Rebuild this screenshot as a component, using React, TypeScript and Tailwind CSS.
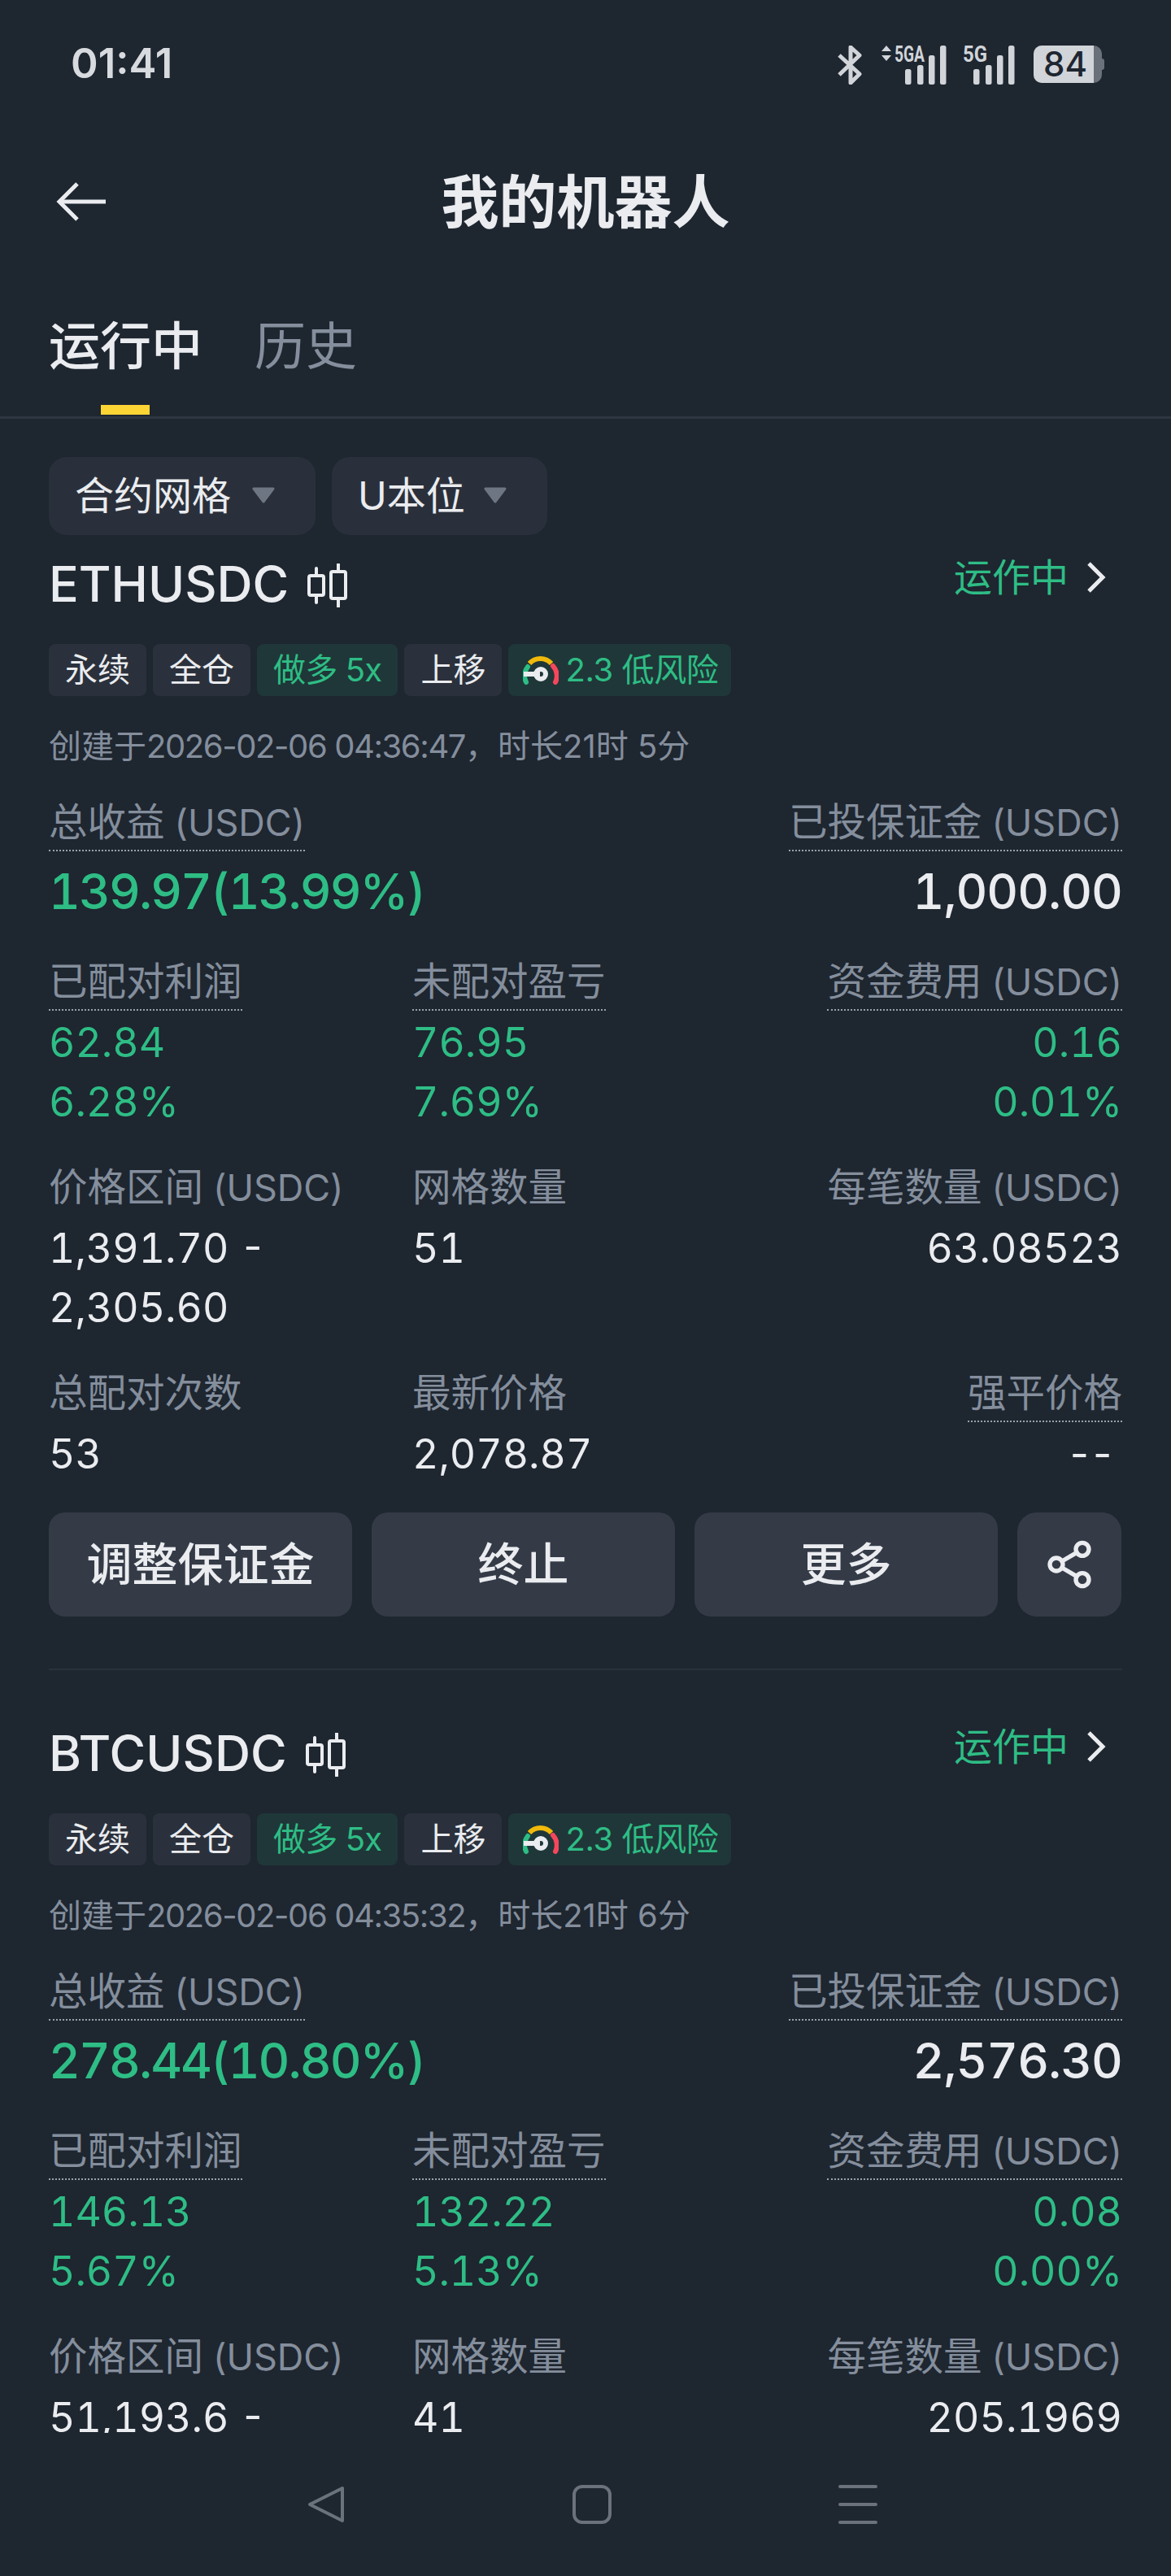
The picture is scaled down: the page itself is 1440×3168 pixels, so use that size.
import { Share2 } from 'lucide-react';

const FONT = 'font-["Inter","Noto_Sans_CJK_SC",sans-serif]';

type Cell = { label: string; unit?: string; dotted?: boolean; values: string[]; green?: boolean };

type Bot = {
  symbol: string;
  time: string;
  duration: string;
  profit: string;
  margin: string;
  rows: Cell[][];
};

const bots: Bot[] = [
  {
    symbol: 'ETHUSDC',
    time: '2026-02-06 04:36:47',
    duration: '，时长21时 5分',
    profit: '139.97(13.99%)',
    margin: '1,000.00',
    rows: [
      [
        { label: '已配对利润', dotted: true, values: ['62.84', '6.28%'], green: true },
        { label: '未配对盈亏', dotted: true, values: ['76.95', '7.69%'], green: true },
        { label: '资金费用', unit: '(USDC)', dotted: true, values: ['0.16', '0.01%'], green: true },
      ],
      [
        { label: '价格区间', unit: '(USDC)', values: ['1,391.70 -', '2,305.60'] },
        { label: '网格数量', values: ['51'] },
        { label: '每笔数量', unit: '(USDC)', values: ['63.08523'] },
      ],
      [
        { label: '总配对次数', values: ['53'] },
        { label: '最新价格', values: ['2,078.87'] },
        { label: '强平价格', dotted: true, values: ['--'] },
      ],
    ],
  },
  {
    symbol: 'BTCUSDC',
    time: '2026-02-06 04:35:32',
    duration: '，时长21时 6分',
    profit: '278.44(10.80%)',
    margin: '2,576.30',
    rows: [
      [
        { label: '已配对利润', dotted: true, values: ['146.13', '5.67%'], green: true },
        { label: '未配对盈亏', dotted: true, values: ['132.22', '5.13%'], green: true },
        { label: '资金费用', unit: '(USDC)', dotted: true, values: ['0.08', '0.00%'], green: true },
      ],
      [
        { label: '价格区间', unit: '(USDC)', values: ['51,193.6 -'] },
        { label: '网格数量', values: ['41'] },
        { label: '每笔数量', unit: '(USDC)', values: ['205.1969'] },
      ],
    ],
  },
];

function Signal5GA() {
  return (
    <svg width="81" height="48" viewBox="0 0 81 48" className="shrink-0 overflow-visible">
      <path d="M7 0l6 7H1zM7 19l6-7H1z" fill="#d1d4d9" />
      <text x="17" y="20" fontSize="28" fontWeight="700" fontFamily="Roboto, sans-serif" fill="#d1d4d9" textLength={37} lengthAdjust="spacingAndGlyphs">
        5GA
      </text>
      <g fill="#d1d4d9">
        <rect x="30" y="29" width="7.5" height="19" rx="2.5" />
        <rect x="45" y="24" width="7.5" height="24" rx="2.5" />
        <rect x="59" y="12" width="7.5" height="36" rx="2.5" />
        <rect x="73" y="0" width="7.5" height="48" rx="2.5" />
      </g>
    </svg>
  );
}

function Signal5G() {
  return (
    <svg width="63" height="48" viewBox="0 0 63 48" className="shrink-0 overflow-visible">
      <text x="0" y="20" fontSize="28" fontWeight="700" fontFamily="Roboto, sans-serif" fill="#d1d4d9" textLength={30} lengthAdjust="spacingAndGlyphs">
        5G
      </text>
      <g fill="#d1d4d9">
        <rect x="13" y="29" width="7.5" height="19" rx="2.5" />
        <rect x="28" y="24" width="7.5" height="24" rx="2.5" />
        <rect x="42" y="12" width="7.5" height="36" rx="2.5" />
        <rect x="56" y="0" width="7.5" height="48" rx="2.5" />
      </g>
    </svg>
  );
}

function StatusBar() {
  return (
    <div className="flex h-[200px] items-start justify-between pl-[87px] pr-[82px] pt-[48px] text-[#d7dade]">
      <span className="text-[51px] leading-[60px] font-semibold">01:41</span>
      <div className="flex items-start pt-[8px]">
        <svg width="30" height="48" viewBox="0 0 30 48" fill="none" stroke="#d1d4d9" strokeWidth="5" className="mr-[23px]">
          <path d="M2 12l25 23-11 11V2l11 10L2 36" strokeLinejoin="round" />
        </svg>
        <Signal5GA />
        <div className="w-[20px]" />
        <Signal5G />
        <div className="ml-[24px] flex h-[46px] items-center">
          <div className="flex h-[46px] w-[84px] items-center rounded-[10px] bg-[#6b717b]">
            <div className="flex h-full w-[74px] items-center justify-center rounded-l-[10px] bg-[#d1d4d9] pl-1 text-[42px] leading-[46px] font-medium text-[#1e2630]">
              84
            </div>
          </div>
          <div className="h-[14px] w-[3px] rounded-r bg-[#6b717b]" />
        </div>
      </div>
    </div>
  );
}

function NavBar() {
  return (
    <div className="relative flex h-[96px] items-center justify-center">
      <svg width="62" height="48" viewBox="0 0 62 48" fill="none" stroke="#eaecef" strokeWidth="5" className="absolute left-[69px] top-[24px]">
        <path d="M61 24H5" />
        <path d="M26 2L4 24l22 22" />
      </svg>
      <h1 className="text-[71px] leading-[96px] font-bold text-[#eaecef]">我的机器人</h1>
    </div>
  );
}

function Tabs() {
  return (
    <div className="h-[140px] border-b-[3px] border-[#2e3641] pt-[8px]">
      <div className="flex gap-[64px] pl-[60px]">
        <div className="relative text-[63px] leading-[84px] font-medium text-[#eaecef]">
          运行中
          <div className="absolute left-[64px] top-[115px] h-[12px] w-[60px] bg-[#fcd535]" />
        </div>
        <div className="text-[63px] leading-[84px] text-[#848e9c]">历史</div>
      </div>
    </div>
  );
}

function Dropdown({ label, width }: { label: string; width: string }) {
  return (
    <div className={`flex h-[96px] items-center justify-between rounded-[22px] bg-[#2a303b] pl-[32px] pr-[50px] text-[48px] text-[#eaecef] ${width}`}>
      <span>{label}</span>
      <svg width="28" height="20" viewBox="0 0 28 20" fill="#6f7683" stroke="#6f7683" strokeWidth="3" strokeLinejoin="round" className="mt-[-2px]">
        <path d="M2 2h24L14 18z" />
      </svg>
    </div>
  );
}

function CandleIcon() {
  return (
    <svg width="50" height="54" viewBox="0 0 50 54" fill="none" stroke="#eaecef" strokeWidth="4" className="ml-[22px] mt-[2px]">
      <rect x="3" y="15" width="18" height="24" rx="2" />
      <rect x="30" y="10" width="18" height="33" rx="2" />
      <path d="M12 6v9M12 39v9M39 1v9M39 43v10" strokeLinecap="round" />
    </svg>
  );
}

function Gauge() {
  return (
    <svg width="44" height="38" viewBox="0 0 44 38" fill="none" className="ml-[2px] mr-[8px]">
      <path d="M4 34a18 18 0 0 1 2-19" stroke="#2ebd85" strokeWidth="6" strokeLinecap="round" />
      <path d="M8 11a18 18 0 0 1 27 0" stroke="#f0b90b" strokeWidth="6" />
      <path d="M37 14a18 18 0 0 1 3 20" stroke="#f6465d" strokeWidth="6" strokeLinecap="round" />
      <path d="M1 21h20v6H1z" fill="#eaecef" />
      <circle cx="22" cy="24" r="6" stroke="#eaecef" strokeWidth="6" />
    </svg>
  );
}

function Tag({ children, green, wide }: { children: React.ReactNode; green?: boolean; wide?: boolean }) {
  return (
    <div className={`flex h-16 items-center rounded-[8px] text-[40px] leading-none ${wide ? 'px-[16px]' : 'px-[20px]'} ${green ? 'bg-[#1f3738] text-[#2ebd85]' : 'bg-[#2b313c] text-[#eaecef]'}`}>
      {children}
    </div>
  );
}

function Label({ label, unit, dotted }: { label: string; unit?: string; dotted?: boolean }) {
  return (
    <div className={`h-[60px] w-fit text-[47.5px] leading-[48px] text-[#848e9c] ${dotted ? 'border-b-2 border-dotted border-[#9aa1ab]' : ''}`}>
      {label}
      {unit && <span className="ml-[12px] text-[45px]">{unit}</span>}
    </div>
  );
}

function Card({ bot }: { bot: Bot }) {
  return (
    <div className="h-[1438px] shrink-0 px-[60px]">
      <div className="flex h-[76px] items-center justify-between">
        <div className="flex items-center text-[61px] font-medium text-[#eaecef]">
          {bot.symbol}
          <CandleIcon />
        </div>
        <div className="mb-[18px] flex items-center pr-[20px] text-[47px] text-[#2ebd85]">
          运作中
          <svg width="24" height="38" viewBox="0 0 24 38" fill="none" stroke="#eaecef" strokeWidth="5" className="ml-[22px]">
            <path d="M3 2l17 17L3 36" />
          </svg>
        </div>
      </div>

      <div className="mt-[35px] flex gap-2">
        <Tag>永续</Tag>
        <Tag>全仓</Tag>
        <Tag green>
          <span className="tracking-[-0.8px]">做多 5x</span>
        </Tag>
        <Tag>上移</Tag>
        <Tag green wide>
          <Gauge />
          <span className="tracking-[-0.4px]">2.3 低风险</span>
        </Tag>
      </div>

      <div className="mt-10 text-[40px] leading-[44px] text-[#848e9c]">
        创建于<span className="tracking-[-1.4px]">{bot.time}</span>
        {bot.duration}
      </div>

      <div className="mt-[47px] flex justify-between">
        <div>
          <Label label="总收益" unit="(USDC)" dotted />
          <div className="mt-[10px] text-[60px] leading-[78px] font-medium tracking-[-1.9px] text-[#2ebd85] tabular-nums">{bot.profit}</div>
        </div>
        <div className="flex flex-col items-end">
          <Label label="已投保证金" unit="(USDC)" dotted />
          <div className="mt-[10px] text-[60px] leading-[78px] font-medium tracking-[-1px] text-[#eaecef] tabular-nums">{bot.margin}</div>
        </div>
      </div>

      {bot.rows.map((row, i) => (
        <div key={i} className={`grid grid-cols-[447px_447px_1fr] ${i === 0 ? 'mt-[48px]' : 'mt-[44px]'}`}>
          {row.map((cell, j) => (
            <div key={j} className={j === 2 ? 'flex flex-col items-end text-right' : ''}>
              <Label label={cell.label} unit={cell.unit} dotted={cell.dotted} />
              <div className={`mt-[3px] text-[50px] leading-[73px] tabular-nums ${cell.green ? 'text-[#2ebd85]' : 'text-[#eaecef]'}`}>
                {cell.values.map((v) => (
                  <div key={v} className={v === '--' ? 'pr-[12px] tracking-[-4px]' : ''}>
                    {v}
                  </div>
                ))}
              </div>
            </div>
          ))}
        </div>
      ))}

      {bot.rows.length === 3 && (
        <>
          <div className="mt-[35px] flex gap-6">
            {['调整保证金', '终止', '更多'].map((t) => (
              <div key={t} className="flex h-32 w-[373px] items-center justify-center rounded-[20px] bg-[#343b47] text-[56px] font-medium text-[#eaecef]">
                {t}
              </div>
            ))}
            <div className="flex h-32 w-32 items-center justify-center rounded-[24px] bg-[#343b47] text-[#eaecef]">
              <Share2 size={64} strokeWidth={2} />
            </div>
          </div>
          <div className="mt-16 h-[2px] bg-[#2a313b]" />
        </>
      )}
    </div>
  );
}

function BottomNav() {
  return (
    <div className="flex h-[176px] shrink-0 justify-center gap-[279px] bg-[#1e2630] pl-4 pt-[64px]">
      <svg width="48" height="48" viewBox="0 0 48 48" fill="none" stroke="#6b727c" strokeWidth="4" strokeLinejoin="round">
        <path d="M44 4v40L4 24z" />
      </svg>
      <div className="h-12 w-12 rounded-[12px] border-4 border-[#6b727c]" />
      <div className="flex h-12 w-12 flex-col justify-between">
        <div className="h-1 rounded-sm bg-[#6b727c]" />
        <div className="h-1 rounded-sm bg-[#6b727c]" />
        <div className="h-1 rounded-sm bg-[#6b727c]" />
      </div>
    </div>
  );
}

export default function App() {
  return (
    <div className={`flex h-[3168px] w-[1440px] flex-col overflow-hidden bg-[#1e2630] ${FONT}`}>
      <StatusBar />
      <NavBar />
      <div className="h-[79px]" />
      <Tabs />
      <div className="flex gap-[20px] px-[60px] pt-[47px]">
        <Dropdown label="合约网格" width="w-[328px]" />
        <Dropdown label="U本位" width="w-[265px]" />
      </div>
      <div className="mt-[23px] min-h-0 flex-1 overflow-hidden">
        {bots.map((bot) => (
          <Card key={bot.symbol} bot={bot} />
        ))}
      </div>
      <BottomNav />
    </div>
  );
}
